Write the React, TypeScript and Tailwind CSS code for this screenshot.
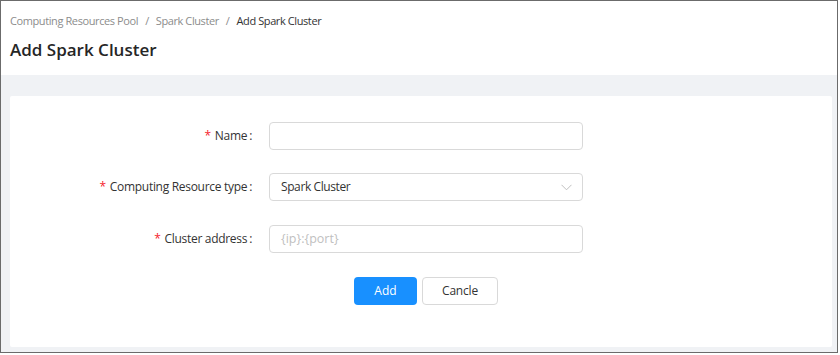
import React from "react";

const font = { fontFamily: '"Open Sans", "Noto Sans", Arial, sans-serif' };

function Label({ text }: { text: string }) {
  return (
    <div className="w-[259px] shrink-0 flex justify-end items-center pr-[17px] text-[12px] tracking-[-0.3px] text-[#333]">
      <span className="text-[#f5222d] mr-[4px] text-[12px]">*</span>
      <span>{text}</span>
      <span className="ml-[2px]">:</span>
    </div>
  );
}

export default function App() {
  return (
    <div style={font} className="w-[838px] h-[353px] border border-[#6b6b6b] bg-[#f0f2f5] flex flex-col">
      <div className="bg-white h-[74px] shrink-0 px-[9px] pt-[12px]">
        <div className="flex items-center text-[11px] tracking-[-0.4px] leading-[16px] text-[#8c8c8c]">
          <span>Computing Resources Pool</span>
          <span className="mx-[7px]">/</span>
          <span>Spark Cluster</span>
          <span className="mx-[7px]">/</span>
          <span className="text-[#333]">Add Spark Cluster</span>
        </div>
        <div className="mt-[9px] text-[17px] leading-[24px] font-semibold text-[#262626]">Add Spark Cluster</div>
      </div>
      <div className="flex-1 pt-[21px] pl-[9px] pr-[5px] pb-[5px] flex">
        <div className="flex-1 bg-white rounded-[2px] pt-[26px] flex flex-col">
          <div className="flex h-[28px]">
            <Label text="Name" />
            <div className="w-[314px] h-[28px] border border-[#d9d9d9] rounded-[4px]" />
          </div>
          <div className="flex h-[28px] mt-[23px]">
            <Label text="Computing Resource type" />
            <div className="w-[314px] h-[28px] border border-[#d9d9d9] rounded-[4px] flex items-center justify-between pl-[11px] pr-[10px] text-[12px] tracking-[-0.4px] text-[#333]">
              <span>Spark Cluster</span>
              <svg width="11" height="7" viewBox="0 0 11 7" fill="none">
                <path d="M0.5 0.8 L5.5 5.8 L10.5 0.8" stroke="#bfbfbf" strokeWidth="1" />
              </svg>
            </div>
          </div>
          <div className="flex h-[28px] mt-[24px]">
            <Label text="Cluster address" />
            <div className="w-[314px] h-[28px] border border-[#d9d9d9] rounded-[4px] flex items-center pl-[11px] text-[12.5px] text-[#bfbfbf]">
              {"{ip}:{port}"}
            </div>
          </div>
          <div className="flex mt-[24px] pl-[344px] gap-[5px]">
            <button className="w-[63px] h-[28px] rounded-[4px] bg-[#1890ff] text-white text-[12px]">Add</button>
            <button className="w-[76px] h-[28px] rounded-[4px] border border-[#d9d9d9] bg-white text-[#333] text-[12px] tracking-[-0.2px]">Cancle</button>
          </div>
        </div>
      </div>
    </div>
  );
}
